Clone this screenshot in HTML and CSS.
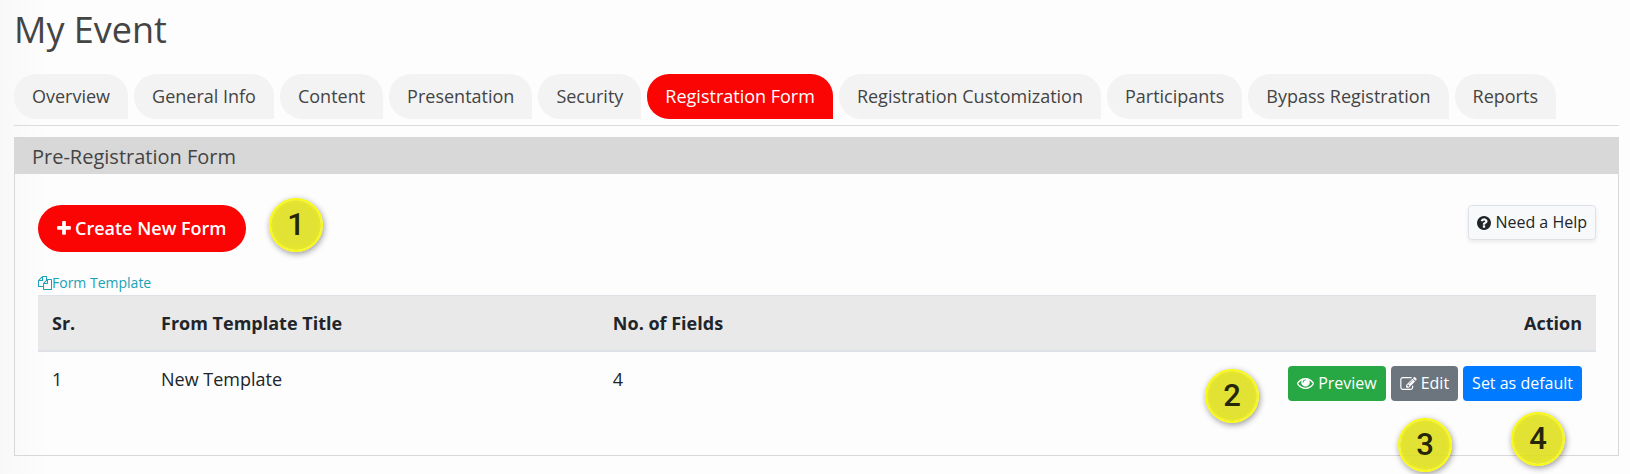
FILE: index.html
```
<!DOCTYPE html>
<html lang="en">
<head>
    <meta charset="UTF-8">
    <meta name="viewport" content="width=device-width, initial-scale=1.0">
    <title>My Event</title>
    <link rel="stylesheet" href="styles.css">
</head>
<body>

    <h1 class="page-title">My Event</h1>

    <!-- Event tabs -->
    <nav class="tabs">
        <a href="#" class="tab">Overview</a>
        <a href="#" class="tab">General Info</a>
        <a href="#" class="tab">Content</a>
        <a href="#" class="tab">Presentation</a>
        <a href="#" class="tab">Security</a>
        <a href="#" class="tab active">Registration Form</a>
        <a href="#" class="tab">Registration Customization</a>
        <a href="#" class="tab">Participants</a>
        <a href="#" class="tab">Bypass Registration</a>
        <a href="#" class="tab">Reports</a>
    </nav>

    <section class="panel">
        <h2 class="panel-header">Pre-Registration Form</h2>

        <div class="panel-body">
            <div class="toolbar">
                <button type="button" class="create-btn">
                    <svg class="icon-plus" viewBox="192 128 1408 1536"><path d="M1600 736v192q0 40-28 68t-68 28h-416v416q0 40-28 68t-68 28h-192q-40 0-68-28t-28-68v-416h-416q-40 0-68-28t-28-68v-192q0-40 28-68t68-28h416v-416q0-40 28-68t68-28h192q40 0 68 28t28 68v416h416q40 0 68 28t28 68z"/></svg>
                    Create New Form
                </button>
                <button type="button" class="btn btn-light">
                    <svg class="icon-help" viewBox="128 128 1536 1536"><path d="M1024 1376v-192q0-14-9-23t-23-9h-192q-14 0-23 9t-9 23v192q0 14 9 23t23 9h192q14 0 23-9t9-23zm256-672q0-88-55.5-163t-138.5-116-170-41q-243 0-371 213-15 24 8 42l132 100q7 6 19 6 16 0 25-12 53-68 86-92 34-24 86-24 48 0 85.5 26t37.5 59q0 38-20 61t-68 45q-63 28-115.5 86.5t-52.5 125.5v36q0 14 9 23t23 9h192q14 0 23-9t9-23q0-19 21.5-49.5t54.5-49.5q32-18 49-28.5t46-35 44.5-48 28-60.5 12.5-81zm384 192q0 209-103 385.5t-279.5 279.5-385.5 103-385.5-103-279.5-279.5-103-385.5 103-385.5 279.5-279.5 385.5-103 385.5 103 279.5 279.5 103 385.5z"/></svg>
                    Need a Help
                </button>
            </div>

            <a href="#" class="template-link">
                <svg class="icon-files" viewBox="0 0 1792 1792"><path d="M1696 384q40 0 68 28t28 68v1216q0 40-28 68t-68 28h-960q-40 0-68-28t-28-68v-288h-544q-40 0-68-28t-28-68v-672q0-40 20-88t48-76l408-408q28-28 76-48t88-20h416q40 0 68 28t28 68v328q68-40 128-40h416zm-544 213l-299 299h299v-299zm-640-384l-299 299h299v-299zm196 647l316-316v-416h-384v416q0 40-28 68t-68 28h-416v640h512v-256q0-40 20-88t48-76zm956 804v-1152h-384v416q0 40-28 68t-68 28h-416v640h896z"/></svg>Form Template
            </a>

            <table class="form-table">
                <thead>
                    <tr>
                        <th class="col-sr">Sr.</th>
                        <th class="col-title">From Template Title</th>
                        <th class="col-fields">No. of Fields</th>
                        <th class="col-action">Action</th>
                    </tr>
                </thead>
                <tbody>
                    <tr>
                        <td>1</td>
                        <td>New Template</td>
                        <td>4</td>
                        <td>
                            <div class="actions">
                                <button type="button" class="btn btn-success">
                                    <svg class="icon-eye" viewBox="0 384 1792 1152"><path d="M1664 960q-152-236-381-353 61 104 61 225 0 185-131.5 316.5t-316.5 131.5-316.5-131.5-131.5-316.5q0-121 61-225-229 117-381 353 133 205 333.5 326.5t434.5 121.5 434.5-121.5 333.5-326.5zm-720-384q0-20-14-34t-34-14q-125 0-214.5 89.5t-89.5 214.5q0 20 14 34t34 14 34-14 14-34q0-86 61-147t147-61q20 0 34-14t14-34zm848 384q0 34-20 69-140 230-376.5 368.5t-499.5 138.5-499.5-139-376.5-368q-20-35-20-69t20-69q140-229 376.5-368t499.5-139 499.5 139 376.5 368q20 35 20 69z"/></svg>
                                    Preview
                                </button>
                                <button type="button" class="btn btn-secondary">
                                    <svg class="icon-edit" viewBox="0 128 1792 1408"><path d="M888 1184l116-116-152-152-116 116v56h96v96h56zm440-720q-16-16-33 1l-350 350q-17 17-1 33t33-1l350-350q17-17 1-33zm80 594v190q0 119-84.5 203.5t-203.5 84.5h-832q-119 0-203.5-84.5t-84.5-203.5v-832q0-119 84.5-203.5t203.5-84.5h832q63 0 117 25 15 7 18 23 3 17-9 29l-49 49q-14 14-32 8-23-6-45-6h-832q-66 0-113 47t-47 113v832q0 66 47 113t113 47h832q66 0 113-47t47-113v-126q0-13 9-22l64-64q15-15 35-7t20 29zm-96-738l288 288-672 672h-288v-288zm444 132l-92 92-288-288 92-92q28-28 68-28t68 28l152 152q28 28 28 68t-28 68z"/></svg>
                                    Edit
                                </button>
                                <button type="button" class="btn btn-primary">Set as default</button>
                            </div>
                        </td>
                    </tr>
                </tbody>
            </table>
        </div>

        <!-- Step markers -->
        <span class="step step-create">1</span>
        <span class="step step-preview">2</span>
        <span class="step step-edit">3</span>
        <span class="step step-default">4</span>
    </section>

</body>
</html>
```
FILE: styles.css
```
* {
    box-sizing: border-box;
}

body {
    font-family: 'Open Sans', sans-serif;
    font-size: 18px;
    line-height: 27px;
    color: #212529;
    background: #fdfdfd linear-gradient(to right, #f8f8f8, #fdfdfd 48px);
    margin: 0;
    padding: 8px 11px 18px 14px;
}

svg {
    fill: currentColor;
    flex: none;
}

.page-title {
    margin: 0 0 23px;
    font-size: 36px;
    line-height: 43px;
    font-weight: 400;
    color: #444;
}

.tabs {
    display: flex;
    flex-wrap: wrap;
    gap: 6px;
    padding-bottom: 6px;
    border-bottom: 1px solid #dadcdd;
    margin-bottom: 11px;
}

.tab {
    padding: 0 18px;
    line-height: 45px;
    color: #444;
    background-color: #f3f3f3;
    border-radius: 22px 22px 0 22px;
    text-decoration: none;
}

.tab.active {
    color: #fff;
    background-color: #fa0404;
}

.panel {
    position: relative;
    border: 1px solid #d8d8d8;
}

.panel-header {
    margin: 0;
    padding: 2px 17px 0;
    font-size: 20px;
    line-height: 34px;
    font-weight: 400;
    color: #444;
    background-color: #d8d8d8;
}

.panel-body {
    padding: 31px 22px 41px 23px;
}

.toolbar {
    display: flex;
    justify-content: space-between;
    align-items: flex-start;
    margin-bottom: 20px;
}

.create-btn {
    display: flex;
    align-items: center;
    gap: 4px;
    padding: 10px 19px;
    border: none;
    border-radius: 24px;
    font: 600 18px/27px 'Open Sans', sans-serif;
    color: #fff;
    background-color: #fa0404;
    cursor: pointer;
}

.btn {
    display: flex;
    align-items: center;
    gap: 4px;
    padding: 4px 8px;
    border: 1px solid transparent;
    border-radius: 4px;
    font: 16px/25px 'Open Sans', sans-serif;
    color: #fff;
    cursor: pointer;
}

.btn-light {
    color: #212529;
    background-color: #f8f9fa;
    border-color: #dee2e6;
    box-shadow: 0 2px 4px rgba(0, 0, 0, 0.08);
}

.btn-success {
    background-color: #28a745;
}

.btn-secondary {
    background-color: #6c757d;
}

.btn-primary {
    background-color: #007bff;
}

.template-link {
    display: flex;
    align-items: center;
    width: max-content;
    margin-bottom: 1px;
    font-size: 14px;
    line-height: 22px;
    color: #17a2b8;
    text-decoration: none;
}

.form-table {
    width: 100%;
    border-collapse: separate;
    border-spacing: 0;
    table-layout: fixed;
}

.form-table th,
.form-table td {
    padding: 14px 14px 13px;
    text-align: left;
    vertical-align: top;
}

.form-table th {
    font-weight: 700;
    background-color: #e9e9e9;
    border-top: 1px solid #dee2e6;
    border-bottom: 2px solid #dee2e6;
}

.form-table .col-sr {
    width: 7%;
}

.form-table .col-title {
    width: 29%;
}

.form-table .col-fields {
    width: 29%;
}

.form-table .col-action {
    text-align: right;
}

.actions {
    display: flex;
    justify-content: flex-end;
    gap: 5px;
}

.icon-plus {
    width: 14px;
    height: 15px;
}

.icon-help,
.icon-files {
    width: 14px;
    height: 14px;
}

.icon-eye {
    width: 17px;
    height: 11px;
}

.icon-edit {
    width: 17px;
    height: 13px;
}

/* Yellow step markers laid over the panel */
.step {
    position: absolute;
    width: 54px;
    height: 54px;
    border: 2px solid #f8f812;
    border-radius: 50%;
    font-family: Roboto, sans-serif;
    font-size: 31px;
    line-height: 50px;
    font-weight: 500;
    text-align: center;
    color: #26260a;
    background-color: rgba(223, 223, 30, 0.9);
    background-clip: padding-box;
    box-shadow: 1px 2px 6px rgba(0, 0, 0, 0.4), inset 0 0 5px rgba(248, 248, 18, 0.6);
}

.step-create {
    top: 60px;
    left: 254px;
}

.step-preview {
    top: 231px;
    right: 359px;
}

.step-edit {
    top: 280px;
    right: 166px;
}

.step-default {
    top: 274px;
    right: 53px;
}
```
